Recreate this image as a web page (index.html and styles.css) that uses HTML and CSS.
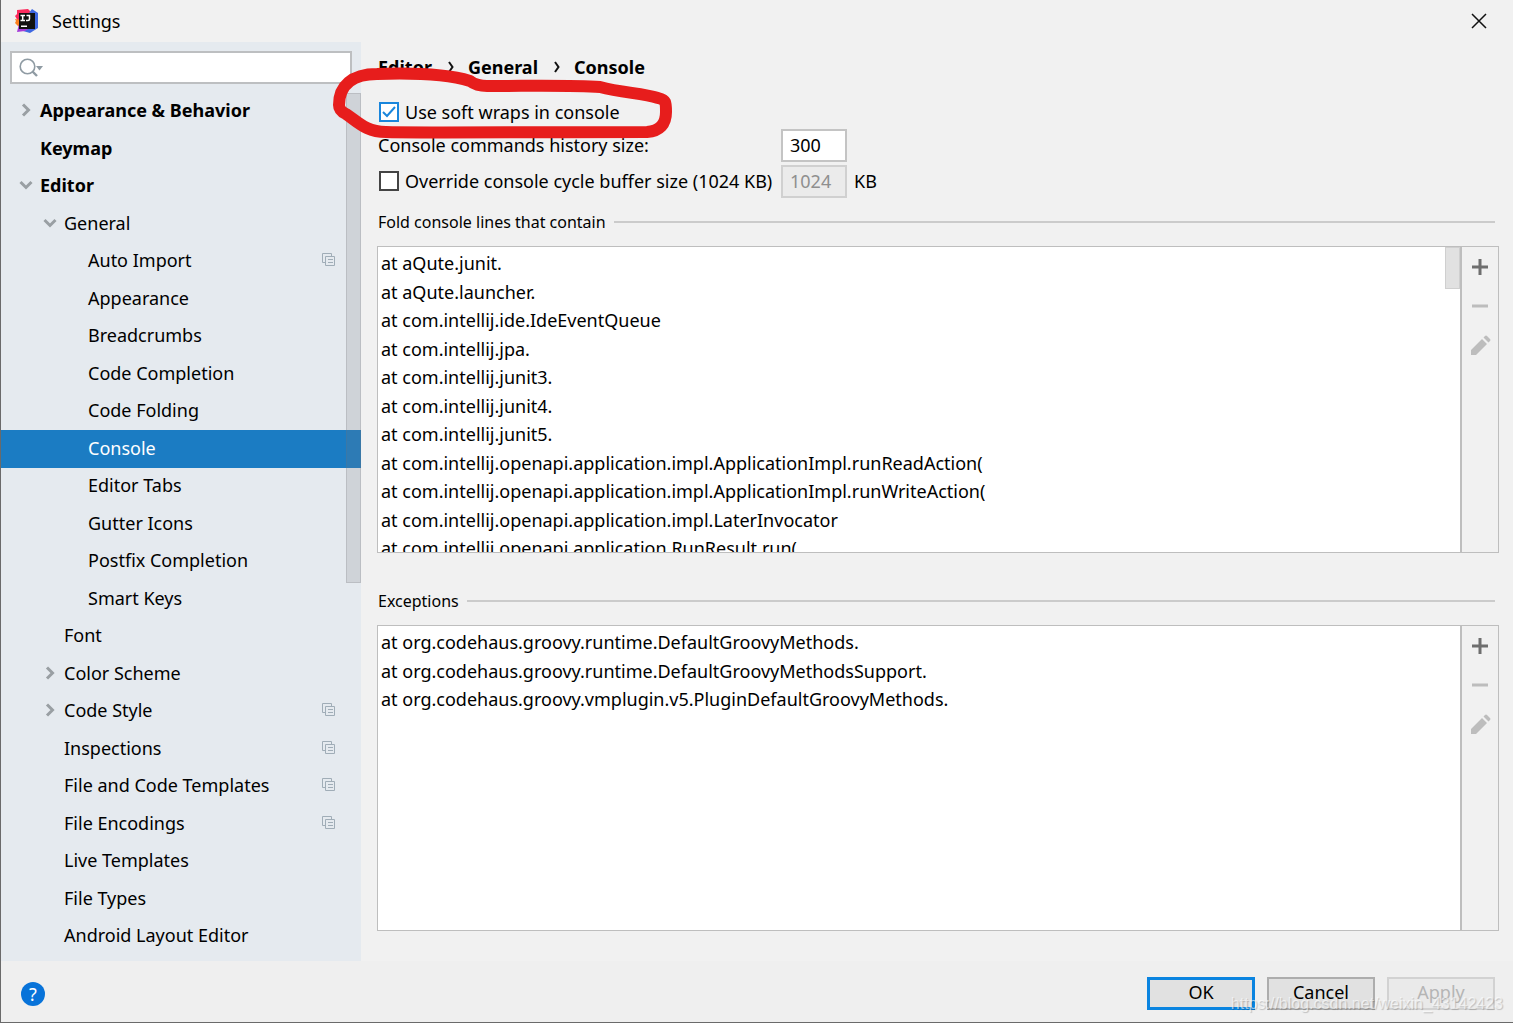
FILE: index.html
```html
<!DOCTYPE html>
<html lang="en">
<head>
<meta charset="utf-8">
<title>Settings</title>
<link rel="stylesheet" href="styles.css">
</head>
<body>
<div class="window">
  <header class="titlebar">
    <svg class="logo" width="24" height="24" viewBox="0 0 24 24" aria-hidden="true">
      <path d="M2 1l11-1 4 4-4 10-10-2-3-5 2-2z" fill="#fb2a5c"/>
      <path d="M0 10l6 1v7l-3-1-3-3 1-2z" fill="#fc801d"/>
      <path d="M17 0l6 4v15l-8 5-7-2 6-18z" fill="#3f68e2"/>
      <path d="M4 15l-2 8 8-1 5-3z" fill="#a43bd8"/>
      <path d="M4 4h16v16H4z" fill="#111"/>
      <path d="M5.500 6.500h4.500M7.700 6.500v5M5.500 11.500h4.500M11.500 6.500h3v3.500q0 1.500-1.500 1.500h-2M6 17.200h6" fill="none" stroke="#fff" stroke-width="1.500"/>
    </svg>
    <h1 class="title">Settings</h1>
    <button class="close" type="button" aria-label="Close">
      <svg width="16" height="16" viewBox="0 0 16 16"><path d="M1 1l14 14M15 1L1 15" stroke="#111" stroke-width="1.500"/></svg>
    </button>
  </header>

  <div class="body">
    <aside class="sidebar">
      <div class="search">
        <svg width="26" height="20" viewBox="0 0 26 20" aria-hidden="true">
          <circle cx="8.500" cy="8.500" r="7.300" fill="none" stroke="#8f9ba3" stroke-width="1.600"/>
          <path d="M13.500 13.500l4.500 4.500" stroke="#8f9ba3" stroke-width="2.400"/>
          <path d="M17 8h7l-3.500 4.500z" fill="#8f9ba3"/>
        </svg>
        <input type="text" aria-label="Search settings">
      </div>
      <ul class="tree">
        <li class="top"><svg class="chev" viewBox="0 0 14 14"><path d="M4 1.500L9.500 7 4 12.500"/></svg>Appearance &amp; Behavior</li>
        <li class="top"><span class="chev"></span>Keymap</li>
        <li class="top"><svg class="chev" viewBox="0 0 14 14"><path d="M1.500 4L7 9.500 12.500 4"/></svg>Editor</li>
        <li class="mid"><svg class="chev" viewBox="0 0 14 14"><path d="M1.500 4L7 9.500 12.500 4"/></svg>General</li>
        <li class="leaf">Auto Import<svg class="copy" viewBox="0 0 14 14"><path d="M3.500 9.500h-3v-9h9v3"/><path d="M3.500 3.500h9v9h-9zM6 6.500h5M6 9.500h5"/></svg></li>
        <li class="leaf">Appearance</li>
        <li class="leaf">Breadcrumbs</li>
        <li class="leaf">Code Completion</li>
        <li class="leaf">Code Folding</li>
        <li class="leaf selected" aria-current="page">Console</li>
        <li class="leaf">Editor Tabs</li>
        <li class="leaf">Gutter Icons</li>
        <li class="leaf">Postfix Completion</li>
        <li class="leaf">Smart Keys</li>
        <li class="mid"><span class="chev"></span>Font</li>
        <li class="mid"><svg class="chev" viewBox="0 0 14 14"><path d="M4 1.500L9.500 7 4 12.500"/></svg>Color Scheme</li>
        <li class="mid"><svg class="chev" viewBox="0 0 14 14"><path d="M4 1.500L9.500 7 4 12.500"/></svg>Code Style<svg class="copy" viewBox="0 0 14 14"><path d="M3.500 9.500h-3v-9h9v3"/><path d="M3.500 3.500h9v9h-9zM6 6.500h5M6 9.500h5"/></svg></li>
        <li class="mid"><span class="chev"></span>Inspections<svg class="copy" viewBox="0 0 14 14"><path d="M3.500 9.500h-3v-9h9v3"/><path d="M3.500 3.500h9v9h-9zM6 6.500h5M6 9.500h5"/></svg></li>
        <li class="mid"><span class="chev"></span>File and Code Templates<svg class="copy" viewBox="0 0 14 14"><path d="M3.500 9.500h-3v-9h9v3"/><path d="M3.500 3.500h9v9h-9zM6 6.500h5M6 9.500h5"/></svg></li>
        <li class="mid"><span class="chev"></span>File Encodings<svg class="copy" viewBox="0 0 14 14"><path d="M3.500 9.500h-3v-9h9v3"/><path d="M3.500 3.500h9v9h-9zM6 6.500h5M6 9.500h5"/></svg></li>
        <li class="mid"><span class="chev"></span>Live Templates</li>
        <li class="mid"><span class="chev"></span>File Types</li>
        <li class="mid"><span class="chev"></span>Android Layout Editor</li>
      </ul>
      <div class="tree-thumb"></div>
    </aside>

    <main class="content">
      <nav class="crumbs" aria-label="Breadcrumb">
        <span>Editor</span><svg class="sep" viewBox="0 0 6 12"><path d="M1 1l3.500 5L1 11"/></svg><span>General</span><svg class="sep" viewBox="0 0 6 12"><path d="M1 1l3.500 5L1 11"/></svg><span>Console</span>
      </nav>
      <div class="options">
        <label class="check wide"><input type="checkbox" checked>Use soft wraps in console</label>
        <label class="name" for="history">Console commands history size:</label>
        <input class="field" id="history" type="text" value="300">
        <span></span>
        <label class="check"><input type="checkbox">Override console cycle buffer size (1024 KB)</label>
        <input class="field" type="text" value="1024" aria-label="Buffer size" disabled>
        <span class="unit">KB</span>
      </div>

      <section class="group">
        <h2>Fold console lines that contain</h2>
        <div class="panel">
          <ul class="lines">
            <li>at aQute.junit.</li>
            <li>at aQute.launcher.</li>
            <li>at com.intellij.ide.IdeEventQueue</li>
            <li>at com.intellij.jpa.</li>
            <li>at com.intellij.junit3.</li>
            <li>at com.intellij.junit4.</li>
            <li>at com.intellij.junit5.</li>
            <li>at com.intellij.openapi.application.impl.ApplicationImpl.runReadAction(</li>
            <li>at com.intellij.openapi.application.impl.ApplicationImpl.runWriteAction(</li>
            <li>at com.intellij.openapi.application.impl.LaterInvocator</li>
            <li>at com.intellij.openapi.application.RunResult.run(</li>
          </ul>
          <div class="thumb"></div>
          <div class="tools">
            <button type="button" aria-label="Add"><svg viewBox="0 0 20 20"><path d="M2 10h16M10 2v16" stroke="#6e6e6e" stroke-width="3"/></svg></button>
            <button type="button" aria-label="Remove" disabled><svg viewBox="0 0 20 20"><path d="M2 10h16" stroke="#bdbdbd" stroke-width="3"/></svg></button>
            <button type="button" aria-label="Edit" disabled><svg viewBox="0 0 20 20"><path d="M1 20v-5L12 4l5 5L6 20zM13.500 2.500L15 1q1-1 2 0L20 4q1 1 0 2L18.500 7.500z" fill="#bdbdbd"/></svg></button>
          </div>
        </div>
      </section>

      <section class="group">
        <h2>Exceptions</h2>
        <div class="panel">
          <ul class="lines">
            <li>at org.codehaus.groovy.runtime.DefaultGroovyMethods.</li>
            <li>at org.codehaus.groovy.runtime.DefaultGroovyMethodsSupport.</li>
            <li>at org.codehaus.groovy.vmplugin.v5.PluginDefaultGroovyMethods.</li>
          </ul>
          <div class="tools">
            <button type="button" aria-label="Add"><svg viewBox="0 0 20 20"><path d="M2 10h16M10 2v16" stroke="#6e6e6e" stroke-width="3"/></svg></button>
            <button type="button" aria-label="Remove" disabled><svg viewBox="0 0 20 20"><path d="M2 10h16" stroke="#bdbdbd" stroke-width="3"/></svg></button>
            <button type="button" aria-label="Edit" disabled><svg viewBox="0 0 20 20"><path d="M1 20v-5L12 4l5 5L6 20zM13.500 2.500L15 1q1-1 2 0L20 4q1 1 0 2L18.500 7.500z" fill="#bdbdbd"/></svg></button>
          </div>
        </div>
      </section>
    </main>
  </div>

  <footer class="footer">
    <button class="help" type="button" aria-label="Help">?</button>
    <div class="actions">
      <button class="btn primary" type="button">OK</button>
      <button class="btn" type="button">Cancel</button>
      <button class="btn" type="button" disabled>Apply</button>
    </div>
    <span class="watermark">https://blog.csdn.net/weixin_43142423</span>
  </footer>

  <svg class="marker" width="345" height="80" viewBox="0 0 345 80" aria-hidden="true">
    <path d="M138 17C115 10 75 9 45 10C20 10 7 22 7 41C7 46 10 48 14 50C26 58 34 68 54 68C70 69 200 68 315 68C328 67 334 60 334 48C334 38 334 36 326 34C310 29 290 29 268 23C240 21 200 22 155 22C146 22 142 20 138 17" fill="none" stroke="#e71d1c" stroke-width="12" stroke-linecap="round" stroke-linejoin="round"/>
  </svg>
</div>
</body>
</html>
```
FILE: styles.css
```css
* { box-sizing: border-box; }

body {
  margin: 0;
  background: #5c5c5c;
  color: #000;
  font: 18px/24px "Noto Sans", "Open Sans", sans-serif;
}

ul, h1, h2 { margin: 0; padding: 0; font-weight: 400; list-style: none; }
button, input { font: inherit; color: inherit; }
svg { display: block; }

.window {
  position: relative;
  display: flex;
  flex-direction: column;
  height: 100vh;
  border: solid #6a6a6a;
  border-width: 0 0 1px 1px;
  background: #f1f1f1;
}

.titlebar {
  display: flex;
  align-items: center;
  gap: 13px;
  height: 42px;
  padding: 0 26px 0 14px;
}
.title { flex: 1; font-size: 18px; }
.close { padding: 0; border: 0; background: none; }

.body { display: flex; flex: 1; min-height: 0; }

.sidebar {
  position: relative;
  width: 360px;
  padding-top: 9px;
  background: #e5eaef;
}
.search {
  display: flex;
  align-items: center;
  height: 33px;
  margin: 0 9px 9px;
  padding: 0 7px;
  border: 2px solid #bdbfc1;
  background: #fff;
}
.search input { flex: 1; min-width: 0; border: 0; outline: 0; background: none; }

.tree li { display: flex; align-items: center; height: 37px; padding: 0 25px 3px 0; }
.tree li:nth-child(even) { height: 38px; }
.tree .top { padding-left: 18px; font-weight: 700; }
.tree .mid { padding-left: 42px; }
.tree .leaf { padding-left: 87px; }
.tree .selected { background: #1b7cc3; color: #fff; }
.chev { width: 14px; height: 14px; margin-right: 7px; fill: none; stroke: #999fa3; stroke-width: 3; }
.copy { width: 14px; height: 14px; margin-left: auto; fill: none; stroke: #a0adb7; stroke-width: 1; }
.tree-thumb {
  position: absolute;
  top: 51px;
  right: 0;
  width: 15px;
  height: 490px;
  border: 1px solid rgba(110, 110, 115, .2);
  background: rgba(120, 120, 125, .2);
}

.content {
  display: flex;
  flex: 1;
  flex-direction: column;
  min-width: 0;
  padding: 13px 14px 30px 16px;
}
.crumbs { display: flex; padding-left: 1px; font-weight: 700; }
.sep { width: 6px; height: 12px; margin: 6px 14px 0 16px; fill: none; stroke: #111; stroke-width: 2; }

.options {
  display: grid;
  grid-template-columns: 403px 66px auto;
  align-items: center;
  justify-content: start;
  row-gap: 3px;
  margin: 18px 0 12px 1px;
}
.name, .unit { padding-bottom: 2px; }
.check { display: flex; align-items: center; gap: 6px; padding: 0 0 1px 1px; white-space: nowrap; }
.options .wide { grid-column: 1 / -1; height: 29px; padding-bottom: 0; }
.check input {
  appearance: none;
  width: 20px;
  height: 20px;
  margin: 0;
  border: 2px solid #444;
  background: #fff;
}
.check input:checked {
  border-color: #1a86dc;
  background: #fff url("data:image/svg+xml,%3Csvg xmlns='http://www.w3.org/2000/svg' viewBox='0 0 16 16'%3E%3Cpath d='M2 8l4 4 8-9' fill='none' stroke='%231a86dc' stroke-width='2'/%3E%3C/svg%3E");
}
.field { width: 66px; height: 33px; padding: 0 7px 2px; border: 2px solid #c4c4c4; background: #fff; }
.field:disabled { border-color: #d0d0d0; background: #ebebeb; color: #8f8f8f; }
.unit { padding-left: 7px; }

.group { display: flex; flex: 1; flex-direction: column; min-height: 0; }
.group + .group { margin-top: 36px; }
h2 {
  display: flex;
  align-items: center;
  gap: 8px;
  margin: 0 4px 12px 1px;
  font-size: 16px;
  line-height: 24px;
}
h2::after { content: ""; flex: 1; height: 2px; background: #cbcbcb; }
.panel {
  position: relative;
  display: flex;
  flex: 1;
  min-height: 0;
  border: 1px solid #bebebe;
}
.lines { flex: 1; min-width: 0; padding: 2px 3px; overflow: hidden; background: #fff; white-space: nowrap; }
.lines li { height: 29px; line-height: 29px; }
.lines li:nth-child(even) { height: 28px; }
.thumb {
  position: absolute;
  top: 0;
  right: 38px;
  width: 15px;
  height: 42px;
  border: 1px solid #cfcfcf;
  background: #e1e1e1;
}
.tools {
  display: flex;
  flex-direction: column;
  align-items: center;
  gap: 19px;
  width: 38px;
  padding-top: 10px;
  border-left: 2px solid #bebebe;
}
.tools button { width: 20px; height: 20px; padding: 0; border: 0; background: none; }
.tools svg { overflow: visible; }

.footer {
  position: relative;
  display: flex;
  align-items: center;
  justify-content: space-between;
  height: 61px;
  padding: 4px 18px 0 20px;
  background: #efefef;
}
.help {
  width: 24px;
  height: 24px;
  padding: 0;
  border: 0;
  border-radius: 50%;
  background: #0873d9;
  color: #fff;
  line-height: 24px;
}
.actions { display: flex; gap: 12px; }
.btn { width: 108px; height: 33px; padding: 0 0 3px; border: 2px solid #adadad; background: #e1e1e1; }
.primary { border: 3px solid #0a84e0; }
.btn:disabled { border-color: #d2d2d2; background: #eaeaea; color: #b5b5b5; }
.watermark {
  position: absolute;
  right: 10px;
  bottom: 6px;
  color: rgba(255, 255, 255, .6);
  font: 16px/24px "Liberation Sans", sans-serif;
  text-shadow: 1px 1px 1px rgba(0, 0, 0, .2);
}

.marker { position: absolute; top: 64px; left: 331px; pointer-events: none; }
```
